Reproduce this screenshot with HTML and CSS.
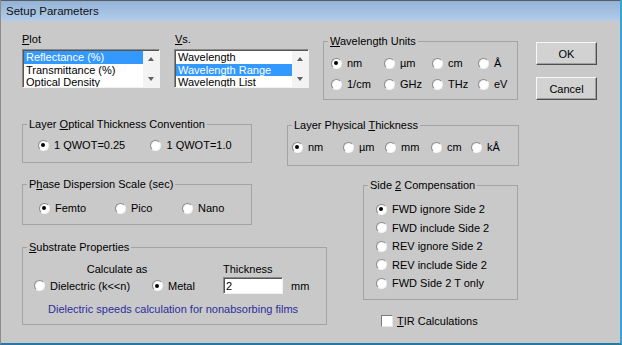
FILE: index.html
```html
<!DOCTYPE html>
<html>

<head>
    <title>Setup Parameters</title>
    <meta charset="utf-8">
    <meta name="viewport" content="width=device-width, initial-scale=1.0">

    <link rel="stylesheet" href="styles.css">
</head>

<body>

    <div class="window">
        <div class="titlebar">Setup Parameters</div>

        <div class="client">

            <div class="row rowTop">
                <div class="listcol plotcol">
                    <div class="caption"><u>P</u>lot</div>
                    <div class="listbox">
                        <ul class="items">
                            <li class="sel">Reflectance (%)</li>
                            <li>Transmittance (%)</li>
                            <li>Optical Density</li>
                        </ul>
                        <div class="scroll"><span class="arrow up"></span><span class="arrow down"></span></div>
                    </div>
                </div>

                <div class="listcol vscol">
                    <div class="caption"><u>V</u>s.</div>
                    <div class="listbox">
                        <ul class="items">
                            <li>Wavelength</li>
                            <li class="sel">Wavelength Range</li>
                            <li>Wavelength List</li>
                        </ul>
                        <div class="scroll"><span class="arrow up"></span><span class="arrow down"></span></div>
                    </div>
                </div>

                <fieldset class="units">
                    <legend><u>W</u>avelength Units</legend>
                    <div class="opts">
                        <label class="radio"><span class="dot on"></span>nm</label>
                        <label class="radio"><span class="dot"></span>µm</label>
                        <label class="radio"><span class="dot"></span>cm</label>
                        <label class="radio"><span class="dot"></span>Å</label>
                        <label class="radio"><span class="dot"></span>1/cm</label>
                        <label class="radio"><span class="dot"></span>GHz</label>
                        <label class="radio"><span class="dot"></span>THz</label>
                        <label class="radio"><span class="dot"></span>eV</label>
                    </div>
                </fieldset>

                <div class="buttons">
                    <button class="btn">OK</button>
                    <button class="btn">Cancel</button>
                </div>
            </div>

            <div class="row rowMid">
                <fieldset class="optical">
                    <legend>Layer <u>O</u>ptical Thickness Convention</legend>
                    <div class="opts">
                        <label class="radio"><span class="dot on"></span>1 QWOT=0.25</label>
                        <label class="radio"><span class="dot"></span>1 QWOT=1.0</label>
                    </div>
                </fieldset>

                <fieldset class="physical">
                    <legend>Layer Physical <u>T</u>hickness</legend>
                    <div class="opts">
                        <label class="radio"><span class="dot on"></span>nm</label>
                        <label class="radio"><span class="dot"></span>µm</label>
                        <label class="radio"><span class="dot"></span>mm</label>
                        <label class="radio"><span class="dot"></span>cm</label>
                        <label class="radio"><span class="dot"></span>kÅ</label>
                    </div>
                </fieldset>
            </div>

            <div class="row rowBottom">
                <div class="leftcol">
                    <fieldset class="phase">
                        <legend>P<u>h</u>ase Dispersion Scale (sec)</legend>
                        <div class="opts">
                            <label class="radio"><span class="dot on"></span>Femto</label>
                            <label class="radio"><span class="dot"></span>Pico</label>
                            <label class="radio"><span class="dot"></span>Nano</label>
                        </div>
                    </fieldset>

                    <fieldset class="substrate">
                        <legend><u>S</u>ubstrate Properties</legend>
                        <div class="subTop">
                            <div class="calc">
                                <div class="cap">Calculate as</div>
                                <div class="calcOpts">
                                    <label class="radio diel"><span class="dot"></span>Dielectric (k&lt;&lt;n)</label>
                                    <label class="radio"><span class="dot on"></span>Metal</label>
                                </div>
                            </div>
                            <div class="thick">
                                <div class="cap">Thickness</div>
                                <div class="thickIn">
                                    <input class="num" type="text" value="2">
                                    <span class="unit">mm</span>
                                </div>
                            </div>
                        </div>
                        <p class="note">Dielectric speeds calculation for nonabsorbing films</p>
                    </fieldset>
                </div>

                <div class="rightcol">
                    <fieldset class="side2">
                        <legend>Side <u>2</u> Compensation</legend>
                        <div class="stack">
                            <label class="radio"><span class="dot on"></span>FWD ignore Side 2</label>
                            <label class="radio"><span class="dot"></span>FWD include Side 2</label>
                            <label class="radio"><span class="dot"></span>REV ignore Side 2</label>
                            <label class="radio"><span class="dot"></span>REV include Side 2</label>
                            <label class="radio"><span class="dot"></span>FWD Side 2 T only</label>
                        </div>
                    </fieldset>

                    <label class="tir"><span class="check"></span><span><u>T</u>IR Calculations</span></label>
                </div>
            </div>

        </div>
    </div>

</body>

</html>
```

FILE: styles.css
```css
body {
    margin: 0;
    font-family: "Liberation Sans", Arial, sans-serif;
    font-size: 11px;
    color: #000;
    background-color: #fff;
}

.window {
    width: 622px;
    height: 345px;
    box-sizing: border-box;
    border-left: 1px solid #8c8c8c;
    border-right: 2px solid #3aa2d6;
    border-bottom: 2px solid #2878a2;
    background-color: #c9c9c9;
    overflow: hidden;
}

.titlebar {
    height: 21px;
    box-sizing: border-box;
    border-top: 1px solid #5c5c5c;
    background: linear-gradient(#93b3d7, #b3cdea);
    padding-left: 5px;
    line-height: 20px;
    font-size: 11.5px;
    color: #111;
}

.client {
    padding: 11.5px 0 0 21px;
}

.row {
    display: flex;
    align-items: flex-start;
}

/* list boxes */

.caption {
    height: 13px;
    line-height: 13px;
    margin-bottom: 3.5px;
}

.plotcol {
    width: 138px;
}

.vscol {
    width: 135px;
    margin-left: 14px;
}

.vscol .caption {
    padding-left: 1px;
}

.listbox {
    display: flex;
    height: 39px;
    box-sizing: border-box;
    background-color: #fff;
    border: 1px solid;
    border-color: #8a8a8a #f2f2f2 #f2f2f2 #8a8a8a;
    box-shadow: inset 1px 1px 0 #555;
    padding: 1px 0 0 1px;
    overflow: hidden;
}

.items {
    flex: 1;
    margin: 0;
    padding: 0;
    list-style: none;
}

.items li {
    height: 12.5px;
    line-height: 12.5px;
    padding-left: 2px;
    white-space: nowrap;
}

.items .sel {
    background-color: #3399ff;
    color: #fff;
}

.scroll {
    width: 16px;
    flex: none;
    background-color: #f3f3f3;
    display: flex;
    flex-direction: column;
    justify-content: space-between;
    align-items: center;
    padding: 6px 0 6px;
    box-sizing: border-box;
}

.arrow {
    width: 0;
    height: 0;
    border-left: 3.5px solid transparent;
    border-right: 3.5px solid transparent;
}

.arrow.up {
    border-bottom: 4px solid #606060;
}

.arrow.down {
    border-top: 4px solid #606060;
}

/* group boxes */

fieldset {
    margin: 0;
    padding: 0;
    min-width: 0;
    box-sizing: border-box;
    border: 1px solid #a3a3a3;
}

legend {
    padding: 0 2px;
    margin-left: 4px;
    height: 13px;
    line-height: 13px;
    white-space: nowrap;
}

.opts {
    display: grid;
    row-gap: 8px;
}

.radio {
    display: flex;
    align-items: center;
    height: 13px;
    white-space: nowrap;
}

.dot {
    position: relative;
    flex: none;
    width: 11px;
    height: 11px;
    box-sizing: border-box;
    border-radius: 50%;
    border: 1px solid;
    border-color: #8d8d8d #f4f4f4 #f4f4f4 #8d8d8d;
    background: radial-gradient(circle at 60% 60%, #fff 55%, #dedede);
    margin-right: 5.5px;
}

.dot.on::after {
    content: "";
    position: absolute;
    left: 2.5px;
    top: 2.5px;
    width: 4px;
    height: 4px;
    border-radius: 50%;
    background-color: #000;
}

.units {
    width: 195px;
    margin: 2.5px 0 0 14px;
    padding: 8.5px 0 8.5px 0;
}

.units .opts {
    margin-left: 6.5px;
    grid-template-columns: 53px 48px 46px auto;
}

.buttons {
    margin: 9.5px 0 0 18px;
    display: flex;
    flex-direction: column;
    gap: 12px;
}

.btn {
    width: 61px;
    height: 23px;
    box-sizing: border-box;
    padding: 0;
    font: inherit;
    color: #000;
    background-color: #d2d2d2;
    border: 1px solid;
    border-color: #f7f7f7 #4f4f4f #4f4f4f #f7f7f7;
    box-shadow: inset -1px -1px 0 #a0a0a0;
}

.rowMid {
    margin-top: 17.5px;
}

.optical {
    width: 230px;
    padding: 8px 0 10.5px 0;
}

.optical .opts {
    margin-left: 14.5px;
    grid-template-columns: 112.5px auto;
}

.physical {
    width: 232px;
    margin: 1px 0 0 35px;
    padding: 9px 0 11.5px 0;
}

.physical .opts {
    margin-left: 3.5px;
    grid-template-columns: 51px 42px 46px 40px auto;
}

.rowBottom {
    margin-top: 11.5px;
}

.leftcol {
    width: 305px;
}

.phase {
    width: 230px;
    padding: 11px 0 9.5px 0;
}

.phase .opts {
    margin-left: 15.5px;
    grid-template-columns: 76px 67px auto;
}

.substrate {
    width: 305px;
    margin-top: 15.5px;
    padding: 9px 0 8.5px 0;
}

.subTop {
    display: flex;
}

.cap {
    height: 13px;
    line-height: 13px;
    margin-bottom: 1.5px;
}

.calc {
    width: 167px;
    margin-left: 10.5px;
    text-align: center;
}

.calcOpts {
    display: flex;
    align-items: center;
    height: 17px;
}

.diel {
    width: 118px;
}

.thick {
    margin-left: 22.5px;
}

.thickIn {
    display: flex;
    align-items: center;
    height: 17px;
}

.num {
    width: 60px;
    height: 17px;
    box-sizing: border-box;
    margin: 0;
    padding: 0 0 0 2px;
    font: inherit;
    color: #000;
    background-color: #fff;
    border: 1px solid;
    border-color: #8a8a8a #f2f2f2 #f2f2f2 #8a8a8a;
    box-shadow: inset 1px 1px 0 #555;
    outline: none;
}

.unit {
    margin-left: 8px;
}

.note {
    margin: 8.5px 0 0 25px;
    height: 13px;
    line-height: 13px;
    color: #2d2d9c;
    white-space: nowrap;
}

.rightcol {
    width: 155px;
    margin: 1px 0 0 36px;
}

.side2 {
    padding: 11px 0 9.5px 0;
}

.stack {
    margin-left: 11.5px;
    display: flex;
    flex-direction: column;
    gap: 5.5px;
}

.tir {
    display: flex;
    align-items: center;
    height: 13px;
    margin: 14.5px 0 0 18px;
}

.check {
    width: 12px;
    height: 12px;
    box-sizing: border-box;
    background-color: #fff;
    border: 1px solid;
    border-color: #7a7a7a #e6e6e6 #e6e6e6 #7a7a7a;
    margin-right: 4px;
}
```
